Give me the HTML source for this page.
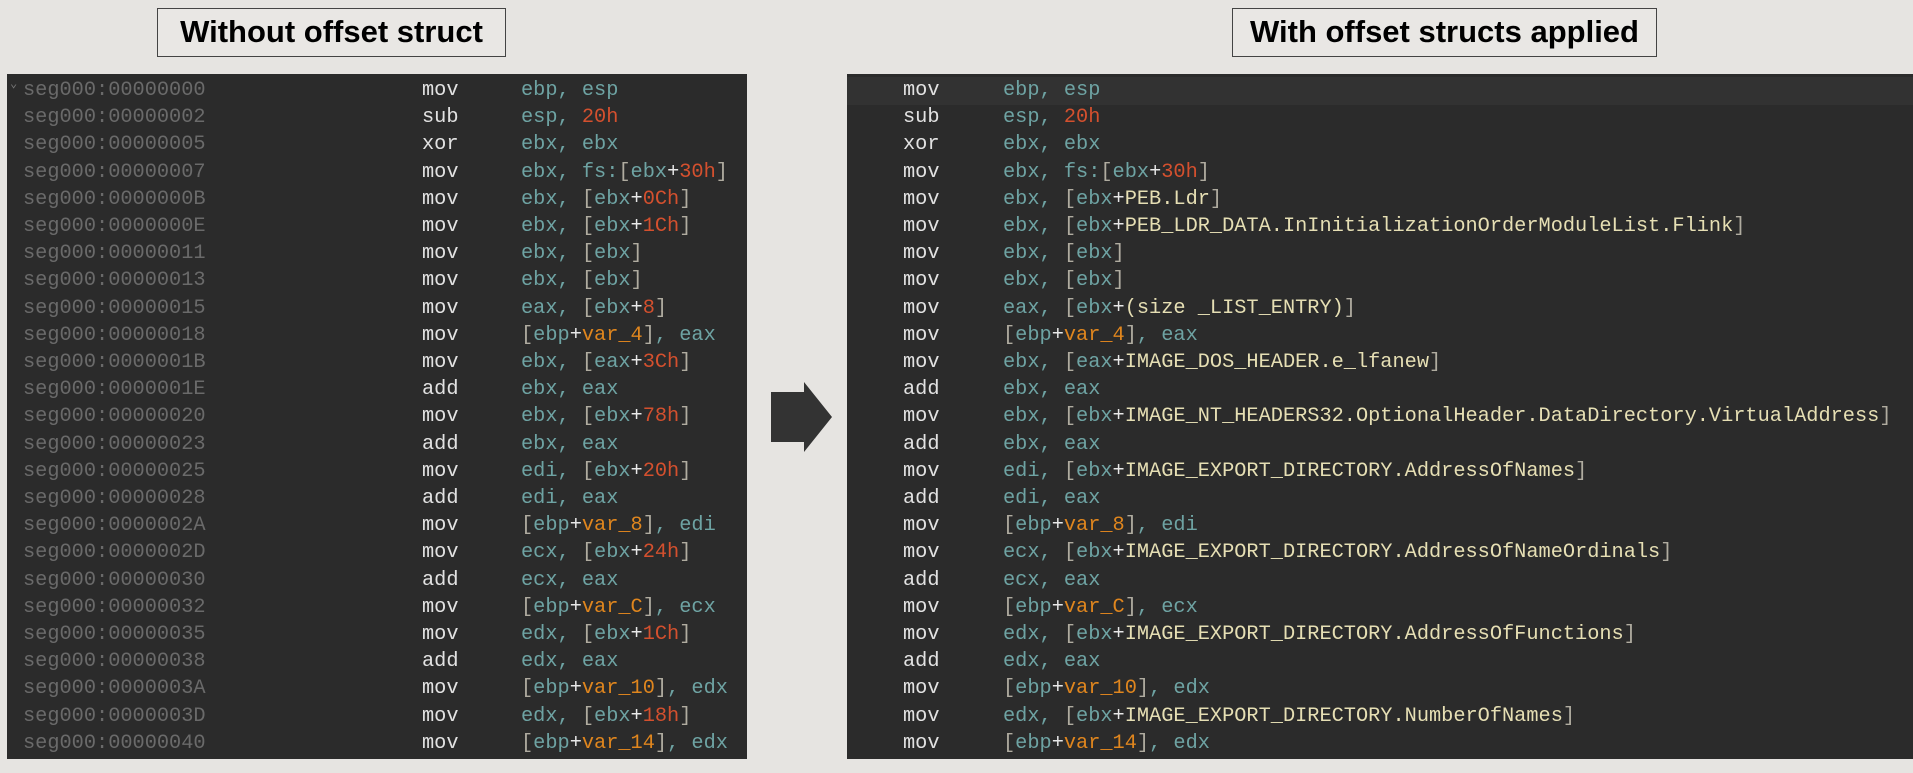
<!DOCTYPE html>
<html><head><style>
body{margin:0;width:1913px;height:773px;background:#e6e4e1;position:relative;overflow:hidden;font-family:"Liberation Sans",sans-serif}
.title{position:absolute;top:8px;height:49px;border:1.5px solid #444;box-sizing:border-box;font-weight:bold;font-size:31px;color:#000;text-align:center;line-height:46px;background:#e9e7e4}
.panel{position:absolute;top:74px;height:685px;background:#2b2b2b;font-family:"Liberation Mono",monospace;font-size:20.3px;white-space:pre;overflow:hidden}
.ln{position:absolute;height:27.2px;line-height:27.2px;left:0;right:0}
.a{color:#6a6a6a;position:absolute}
.m{color:#e2e2e2;position:absolute}
.o{color:#6ea3a3;position:absolute}
.n{color:#d4502e}.v{color:#e0861e}.p{color:#e8e8e8}.b{color:#b0aca0}.s{color:#e6dfb4}
</style></head><body>
<div class="title" style="left:157px;width:349px">Without offset struct</div>
<div class="title" style="left:1232px;width:425px">With offset structs applied</div>
<svg style="position:absolute;left:771px;top:382px" width="62" height="70"><polygon points="0,10 33,10 33,0 61,35 33,70 33,60 0,60" fill="#333"/></svg>
<div class="panel" id="L" style="left:7px;width:740px"></div>
<div class="panel" id="R" style="left:847px;width:1066px"><div style="position:absolute;left:0;right:0;top:3px;height:28px;background:#323232"></div></div>
<script>
const ops=[["mov",'ebp, esp'],["sub",'esp, <span class=n>20h</span>'],["xor",'ebx, ebx'],["mov",'ebx, fs:<span class=b>[</span>ebx<span class=p>+</span><span class=n>30h</span><span class=b>]</span>'],
["mov",'ebx, <span class=b>[</span>ebx<span class=p>+</span><span class=n>0Ch</span><span class=b>]</span>','ebx, <span class=b>[</span>ebx<span class=p>+</span><span class=s>PEB.Ldr</span><span class=b>]</span>'],
["mov",'ebx, <span class=b>[</span>ebx<span class=p>+</span><span class=n>1Ch</span><span class=b>]</span>','ebx, <span class=b>[</span>ebx<span class=p>+</span><span class=s>PEB_LDR_DATA.InInitializationOrderModuleList.Flink</span><span class=b>]</span>'],
["mov",'ebx, <span class=b>[</span>ebx<span class=b>]</span>'],["mov",'ebx, <span class=b>[</span>ebx<span class=b>]</span>'],
["mov",'eax, <span class=b>[</span>ebx<span class=p>+</span><span class=n>8</span><span class=b>]</span>','eax, <span class=b>[</span>ebx<span class=p>+</span><span class=s>(size _LIST_ENTRY)</span><span class=b>]</span>'],
["mov",'<span class=b>[</span>ebp<span class=p>+</span><span class=v>var_4</span><span class=b>]</span>, eax'],
["mov",'ebx, <span class=b>[</span>eax<span class=p>+</span><span class=n>3Ch</span><span class=b>]</span>','ebx, <span class=b>[</span>eax<span class=p>+</span><span class=s>IMAGE_DOS_HEADER.e_lfanew</span><span class=b>]</span>'],
["add",'ebx, eax'],
["mov",'ebx, <span class=b>[</span>ebx<span class=p>+</span><span class=n>78h</span><span class=b>]</span>','ebx, <span class=b>[</span>ebx<span class=p>+</span><span class=s>IMAGE_NT_HEADERS32.OptionalHeader.DataDirectory.VirtualAddress</span><span class=b>]</span>'],
["add",'ebx, eax'],
["mov",'edi, <span class=b>[</span>ebx<span class=p>+</span><span class=n>20h</span><span class=b>]</span>','edi, <span class=b>[</span>ebx<span class=p>+</span><span class=s>IMAGE_EXPORT_DIRECTORY.AddressOfNames</span><span class=b>]</span>'],
["add",'edi, eax'],
["mov",'<span class=b>[</span>ebp<span class=p>+</span><span class=v>var_8</span><span class=b>]</span>, edi'],
["mov",'ecx, <span class=b>[</span>ebx<span class=p>+</span><span class=n>24h</span><span class=b>]</span>','ecx, <span class=b>[</span>ebx<span class=p>+</span><span class=s>IMAGE_EXPORT_DIRECTORY.AddressOfNameOrdinals</span><span class=b>]</span>'],
["add",'ecx, eax'],
["mov",'<span class=b>[</span>ebp<span class=p>+</span><span class=v>var_C</span><span class=b>]</span>, ecx'],
["mov",'edx, <span class=b>[</span>ebx<span class=p>+</span><span class=n>1Ch</span><span class=b>]</span>','edx, <span class=b>[</span>ebx<span class=p>+</span><span class=s>IMAGE_EXPORT_DIRECTORY.AddressOfFunctions</span><span class=b>]</span>'],
["add",'edx, eax'],
["mov",'<span class=b>[</span>ebp<span class=p>+</span><span class=v>var_10</span><span class=b>]</span>, edx'],
["mov",'edx, <span class=b>[</span>ebx<span class=p>+</span><span class=n>18h</span><span class=b>]</span>','edx, <span class=b>[</span>ebx<span class=p>+</span><span class=s>IMAGE_EXPORT_DIRECTORY.NumberOfNames</span><span class=b>]</span>'],
["mov",'<span class=b>[</span>ebp<span class=p>+</span><span class=v>var_14</span><span class=b>]</span>, edx']];
const addr=["00000000","00000002","00000005","00000007","0000000B","0000000E","00000011","00000013","00000015","00000018","0000001B","0000001E","00000020","00000023","00000025","00000028","0000002A","0000002D","00000030","00000032","00000035","00000038","0000003A","0000003D","00000040"];
let L='',R='';
ops.forEach((o,i)=>{const t=(3+i*27.2).toFixed(1);
L+=`<div class=ln style="top:${t}px"><span class=a style="left:16px">seg000:${addr[i]}</span><span class=m style="left:415px">${o[0]}</span><span class=o style="left:514px">${o[1]}</span></div>`;
R+=`<div class=ln style="top:${t}px"><span class=m style="left:56px">${o[0]}</span><span class=o style="left:156px">${o[2]||o[1]}</span></div>`;});
document.getElementById('L').innerHTML=L+'<span style="position:absolute;left:3px;top:2px;color:#777;font-size:12px">&#8964;</span>';
document.getElementById('R').innerHTML+=R;
</script>
</body></html>
